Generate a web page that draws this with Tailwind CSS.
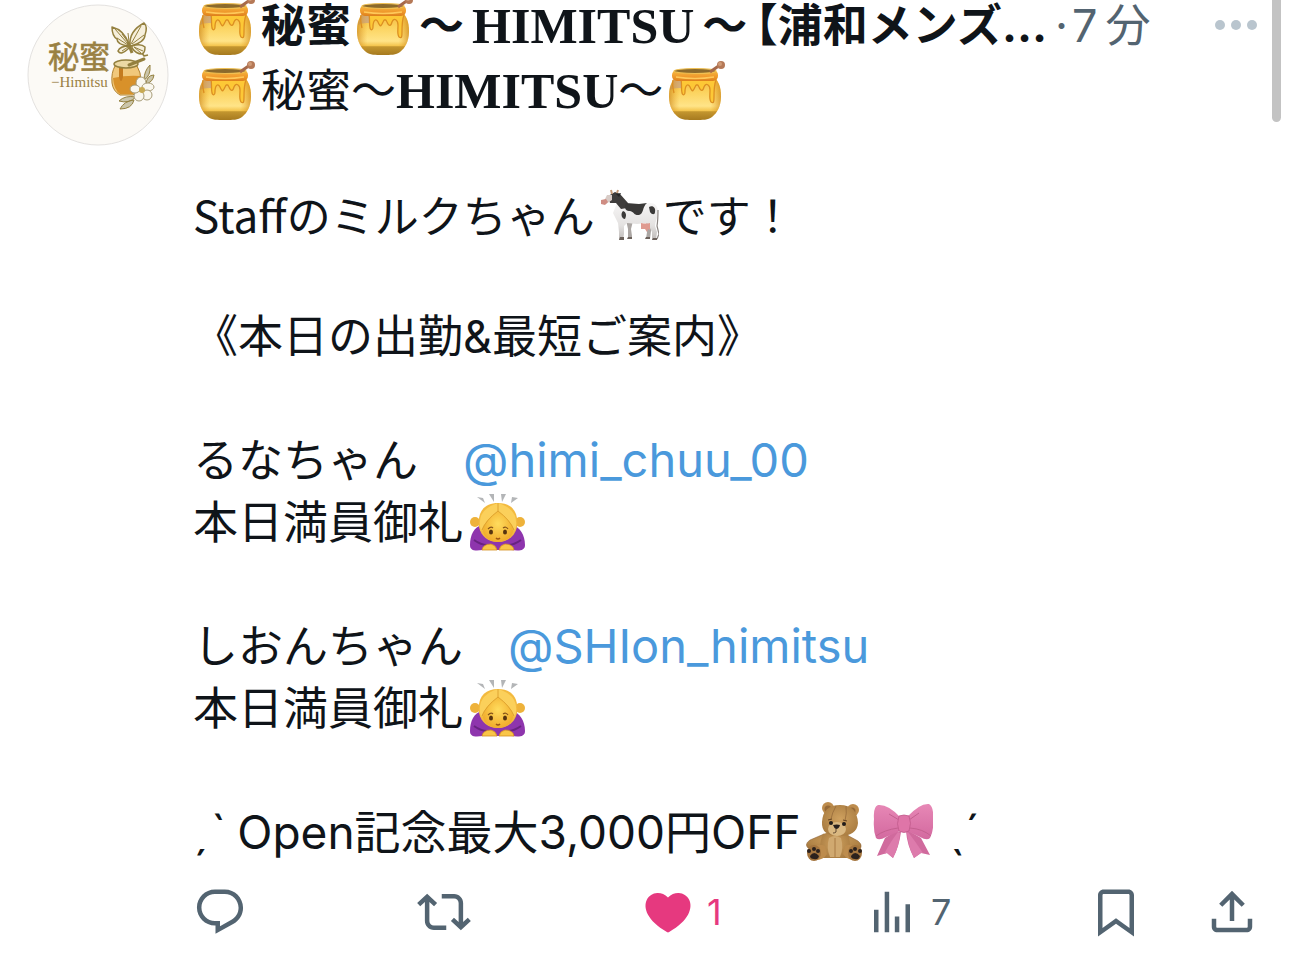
<!DOCTYPE html>
<html lang="ja">
<head>
    <meta charset="UTF-8">
    <meta name="viewport" content="width=device-width, initial-scale=1.0">
    <title>秘蜜〜HIMITSU〜</title>
    <script src="https://cdn.jsdelivr.net/npm/@tailwindcss/browser@4"></script>
</head>
<body class="relative min-h-screen overflow-x-hidden bg-white text-[#0f1419] font-['Inter','Noto_Sans_CJK_JP',sans-serif]">
    <!-- Shared emoji drawings -->
    <svg class="absolute h-0 w-0" aria-hidden="true">
        <defs>
            <linearGradient id="honey-body" x1="0" y1="0" x2="0" y2="1">
                <stop offset="0" stop-color="#f3b640" />
                <stop offset=".3" stop-color="#fbd25c" />
                <stop offset=".66" stop-color="#ffe488" />
                <stop offset=".77" stop-color="#f4c650" />
                <stop offset=".8" stop-color="#c3962f" />
                <stop offset="1" stop-color="#a67a1f" />
            </linearGradient>
            <linearGradient id="honey-side" x1="0" y1="0" x2="1" y2="0">
                <stop offset="0" stop-color="#c2780f" stop-opacity=".6" />
                <stop offset=".2" stop-color="#e69a1c" stop-opacity="0" />
                <stop offset=".8" stop-color="#e69a1c" stop-opacity="0" />
                <stop offset="1" stop-color="#c2780f" stop-opacity=".6" />
            </linearGradient>
            <linearGradient id="honey-rim" x1="0" y1="0" x2="0" y2="1">
                <stop offset="0" stop-color="#f5bc45" />
                <stop offset=".6" stop-color="#f09a2c" />
                <stop offset="1" stop-color="#dd7f1c" />
            </linearGradient>
            <radialGradient id="skin" cx=".5" cy=".45" r=".6">
                <stop offset="0" stop-color="#ffdc5e" />
                <stop offset="1" stop-color="#f0a928" />
            </radialGradient>
            <radialGradient id="fur" cx=".5" cy=".45" r=".6">
                <stop offset="0" stop-color="#cfa15f" />
                <stop offset="1" stop-color="#a87b40" />
            </radialGradient>
            <linearGradient id="pink" x1="0" y1="0" x2="0" y2="1">
                <stop offset="0" stop-color="#e788b6" />
                <stop offset="1" stop-color="#d3699f" />
            </linearGradient>
            <linearGradient id="hide" x1="0" y1="0" x2="0" y2="1">
                <stop offset="0" stop-color="#f6f5f5" />
                <stop offset=".6" stop-color="#e4e2e1" />
                <stop offset="1" stop-color="#bdb9b7" />
            </linearGradient>
        </defs>
        <symbol id="honey" viewBox="0 0 60 60">
            <path d="M7 18C3 23 2 29 2 36c0 9 4 16 9 20 4 3 9 3 17 3s13 0 17-3c5-4 9-11 9-20 0-7-1-13-5-18z" fill="url(#honey-body)" />
            <path d="M4 25l3-7h8v9c-4 0-8 0-12 2z" fill="#cba683" opacity=".8" />
            <path d="M7 18C3 23 2 29 2 36c0 9 4 16 9 20 4 3 9 3 17 3s13 0 17-3c5-4 9-11 9-20 0-7-1-13-5-18z" fill="url(#honey-side)" />
            <path d="M14 18c1 3 0 7 1 14 1 3 3 2 3-1 0-7 3-9 5-5 2 5 3 5 5 0 1-3 3-3 4 0 2 5 4 4 5 0 2-5 6-2 6 3 0 6-1 9 1 12 3 2 3-1 3-5 0-7 0-12 3-18z" fill="#fdc836" />
            <path d="M6 19c-1 5 0 9 1 13M14 19c1 3 0 7 1 13 1 3 3 2 3-1 0-7 3-9 5-5 2 5 3 5 5 0 1-3 3-3 4 0 2 5 4 4 5 0 2-5 6-2 6 3 0 6-1 9 1 12 3 2 3-1 3-5 0-7 0-12 2-17" fill="none" stroke="#dc8f22" stroke-width="1.3" />
            <rect x="5" y="9" width="46" height="11" rx="5" fill="url(#honey-rim)" />
            <ellipse cx="28" cy="10" rx="21" ry="2.5" fill="#8b6a2c" stroke="#f0c052" stroke-width="1.2" />
            <path d="M9 16q19 3 38 0" stroke="#ffc95a" stroke-width="1.5" fill="none" />
            <path d="M43 11L53 4" stroke="#a66949" stroke-width="3" />
            <circle cx="54" cy="4" r="4" fill="#b57957" />
            <circle cx="53" cy="3" r="2" fill="#d09c78" />
        </symbol>
        <symbol id="cow" viewBox="0 0 60 60">
            <path d="M27 36l2 9 0 10 4 0 0-3-1-7 2-8zM48 34l-1 10 1 4-1 7 4 0 1-8 2-10z" fill="#aba6a3" />
            <path d="M18 19l12 0 9 2 12-2c5 0 8 3 8 9 0 5-3 10-3 14l2 6-1 8h-4l0-8-4-8-2-1-9 1-10-1-3 3 0 8-1 6h-4l0-8-1-9-5-10z" fill="url(#hide)" />
            <path d="M9 12l7-4 5 2 8 9-1 5-6 1-5-6-6 0z" fill="#3f3d3c" />
            <path d="M27 19l13 1 8-1c-5 4-3 11-8 12-5 1-6-5-10-4-4 0-5-4-3-8zM50 23c4-2 7 1 6 5 0 3-3 3-5 0zM24 27c3 1 4 4 2 8-3 0-5-5-2-8z" fill="#3a3938" />
            <path d="M8 11l5 0 0 5-6 4-3-1z" fill="#d8cbc6" />
            <path d="M2 16l5-1 2 3-3 3-4-1z" fill="#cf8d83" />
            <path d="M13 10l-1-4M18 9l1-3" stroke="#c59a78" stroke-width="2" />
            <path d="M17 10l5-1-2 4z" fill="#262524" />
            <path d="M42 39q5 1 9 0l0 7-2-1-1 3-2-3-4 0z" fill="#df9a90" />
            <path d="M59 26q0 10-1 16l2 8-2 5" fill="none" stroke="#8b8582" stroke-width="1.2" />
            <path d="M21 53h4v3h-5zM29 53h4v2h-5zM47 53h4v2h-5zM54 54h4v2h-5z" fill="#6b615b" />
        </symbol>
        <symbol id="bowing" viewBox="0 0 60 60">
            <path d="M10 4l6 1 2 5zM22 1h5l0 8zM34 1h5l-4 8zM45 4l6 1-7 5z" fill="#b3b5b7" />
            <path d="M3 52c0-10 4-18 12-20h30c8 2 13 10 13 20 0 6-6 6-14 5H16c-8 1-13 1-13-5z" fill="#8e35ad" />
            <path d="M7 47q7 5 13 5M54 47q-7 5-13 5" stroke="#682381" stroke-width="2" fill="none" />
            <circle cx="8" cy="29" r="5" fill="#eeb23a" />
            <circle cx="53" cy="29" r="5" fill="#eeb23a" />
            <path d="M12 34C10 18 18 10 31 10s21 8 19 24c-2 9-9 15-19 15S14 43 12 34z" fill="#f3ba3f" />
            <path d="M16 38q2-10 15-22 13 12 15 22c-1 7-8 11-15 11s-14-4-15-11z" fill="url(#skin)" />
            <path d="M31 10v8Q18 27 14 38 8 17 31 10M31 10v8q13 9 17 20 6-21-17-28" fill="#fbd05b" />
            <path d="M31 10v8M31 18Q19 27 15 37M31 18q12 9 16 19" fill="none" stroke="#d89a2a" stroke-width=".8" />
            <path d="M21 36q3-3 5-1M36 35q3-2 5 1" stroke="#855219" stroke-width="1.2" fill="none" />
            <ellipse cx="24" cy="39" rx="2" ry="2.5" fill="#57340f" />
            <ellipse cx="38" cy="39" rx="2" ry="2.5" fill="#57340f" />
            <path d="M29 45q2 2 4 0" stroke="#9d5513" stroke-width="1.5" fill="none" />
            <path d="M15 57q1-6 9-6 5 1 6 6zM32 57q1-5 6-6 8 0 9 6z" fill="#f9c548" stroke="#d58f20" stroke-width=".8" />
        </symbol>
        <symbol id="teddy" viewBox="0 0 60 60">
            <path d="M19 32L5 38q-6 4-2 8l17-3zM42 33l11 6q5 4 2 8l-15-4z" fill="url(#fur)" stroke="#86592c" stroke-width=".5" />
            <path d="M18 32q12-5 25 0 4 14 1 24H18q-6-11 0-24z" fill="url(#fur)" />
            <path d="M24 36q6-4 12 0 3 10-1 19H25q-4-9-1-19z" fill="#d0a970" />
            <path d="M30 36v19" stroke="#a87b45" stroke-width="1" />
            <circle cx="23" cy="6" r="6" fill="#bd8c4d" />
            <circle cx="48" cy="8" r="6" fill="#bd8c4d" />
            <circle cx="23" cy="7" r="3.5" fill="#956937" />
            <circle cx="47" cy="9" r="3.5" fill="#956937" />
            <path d="M17 20Q18 3 35 3t18 18q-1 13-19 13T17 20z" fill="url(#fur)" />
            <path d="M31 4q-4 7-5 13M41 4q1 7-1 15" stroke="#95693a" stroke-width=".8" fill="none" />
            <ellipse cx="32" cy="27" rx="9" ry="7" fill="#dab881" />
            <circle cx="26" cy="21" r="2" fill="#211c19" />
            <circle cx="39" cy="22" r="2" fill="#211c19" />
            <path d="M23 18l4-1M38 18l4 1" stroke="#654321" stroke-width="1" />
            <path d="M28 23q4-1 7 0-1 4-4 4-2-1-3-4z" fill="#29211e" />
            <path d="M31 27v3q-1 1-3 1" fill="none" stroke="#493421" stroke-width=".8" />
            <path d="M20 44q-6-3-14 1l4 13q9 0 12-6zM40 44q6-3 14 1l-4 13q-8 0-12-6z" fill="#bd8c4d" />
            <ellipse cx="9" cy="51" rx="7" ry="8" fill="#a4753f" />
            <ellipse cx="50" cy="51" rx="7" ry="8" fill="#a4753f" />
            <path d="M5 54q4-6 9 0-1 4-5 3-4 0-4-3M46 54q4-6 9 0-1 4-5 3-4 0-4-3" fill="#2b211d" />
            <g fill="#2b211d">
                <circle cx="4" cy="49" r="2" /><circle cx="9" cy="47" r="2" /><circle cx="13" cy="49" r="2" />
                <circle cx="46" cy="49" r="2" /><circle cx="50" cy="47" r="2" /><circle cx="55" cy="49" r="2" />
            </g>
        </symbol>
        <symbol id="ribbon" viewBox="0 0 60 60">
            <path d="M23 29L12 36 4 54l10-3 6 5q6-11 8-26zM36 29l12 7 9 17-9-2-7 5q-7-13-8-27z" fill="#d06a9d" />
            <path d="M25 30q-7 9-14 22l3-1 6 5q6-11 7-25zM35 30q7 9 15 21l-2 0-7 5q-6-12-7-25z" fill="#dd7bac" />
            <path d="M27 15Q15 2 5 3 0 5 1 17q-1 11 2 19 3 3 10-1l14-6zM34 15Q47 1 56 2q5 3 4 15 1 12-3 19-3 3-10-1l-13-6z" fill="url(#pink)" />
            <path d="M3 34q8-6 22-8M58 34q-8-7-21-8M16 12l10 6M46 11l-10 7" stroke="#c4608f" stroke-width="1" fill="none" />
            <path d="M26 14q5-2 10 0 3 7 0 15-5 3-10 0-3-7 0-15z" fill="#df75a8" stroke="#c05a8c" stroke-width=".8" />
        </symbol>
    </svg>

    <article class="flex gap-6 pl-[27px]">
        <!-- Avatar -->
        <a href="#" aria-label="秘蜜 Himitsu" class="mt-1 h-[142px] w-[142px] shrink-0">
            <svg viewBox="0 0 142 142" class="h-full w-full">
                <circle cx="71" cy="71" r="70" fill="#fcfaf6" stroke="#e4e2e0" />
                <text x="21" y="64" font-size="31" fill="#9a8143" stroke="#9a8143" stroke-width=".6" font-family="Noto Sans CJK JP, sans-serif">秘蜜</text>
                <text x="24" y="83" font-size="15" fill="#9a8143" font-family="Liberation Serif, serif">−Himitsu</text>
                <!-- butterfly -->
                <g fill="#f6efdb" stroke="#94803f" stroke-width="1.5" stroke-linejoin="round">
                    <path d="M102 40Q97 26 85 23q0 9 5 12 0 6 12 7zM103 41q-1-14 14-22 4 4 1 12 0 7-14 11z" />
                    <path d="M102 42q-9 0-11 5 3 5 11-3zM105 42q9-3 13 1 0 6-3 7-6 0-10-6zM115 49l2 3 4-1" />
                    <path d="M88 25l13 15M90 34l11 7M104 40l10-18M105 40l12-9M95 47l6-4M107 43l9 4M107 43l7 6" fill="none" stroke-width="1" />
                    <path d="M101 38l4 11" fill="none" stroke-width="3" />
                    <path d="M101 38l-6-8M102 38l-1-9" fill="none" stroke-width="1" />
                </g>
                <!-- jar -->
                <path d="M88 62q-4 7-3 17 1 8 8 12h13q7-4 8-13 0-10-4-16z" fill="#f1c87b" stroke="#b1822f" />
                <path d="M86 74q14-3 27-2-1 14-7 18H93q-6-4-7-16z" fill="#d8912a" />
                <path d="M92 63v10q2 8 4 0V64" fill="#c47b1f" />
                <ellipse cx="99" cy="60" rx="12" ry="4" fill="#ecd9a4" stroke="#94803f" stroke-width="1.5" />
                <path d="M102 61l15-6" stroke="#94803f" stroke-width="3" stroke-linecap="round" />
                <!-- flower and leaves -->
                <path d="M117 76q0-9 6-15 1 11-6 15zM119 80q1-9 8-9-1 7-8 9zM109 93q-11-2-17 4 10 3 17-4zM107 96q-10 1-14 9 12 0 14-9z" fill="#cbc5aa" stroke="#94803f" />
                <g fill="#faf7ee" stroke="#a79c78">
                    <ellipse cx="114" cy="79" rx="5" ry="6" />
                    <ellipse cx="121" cy="83" rx="6" ry="4" />
                    <ellipse cx="120" cy="91" rx="5" ry="5" />
                    <ellipse cx="112" cy="92" rx="5" ry="5" />
                    <ellipse cx="108" cy="85" rx="5" ry="4" />
                </g>
                <circle cx="115" cy="86" r="3" fill="#c8aa53" />
            </svg>
        </a>

        <div class="min-w-0 flex-1 text-[45px] leading-[62px]">
            <!-- Name, time and menu -->
            <header class="mb-2 flex h-[52px] items-center whitespace-nowrap">
                <h1 class="flex items-center font-bold">
                    <svg class="mx-1 h-15 w-15" role="img" aria-label="🍯"><use href="#honey" /></svg>
                    <span>秘蜜</span>
                    <svg class="mx-1 h-15 w-15" role="img" aria-label="🍯"><use href="#honey" /></svg>
                    <span>～</span>
                    <span class="mx-2 font-['Liberation_Serif',serif] text-[50px]">HIMITSU</span>
                    <span class="pr-2">～</span>
                    <span class="[font-feature-settings:'halt']">【</span>
                    <span>浦和メンズ…</span>
                </h1>
                <div class="flex pl-2 text-[#536471]">
                    <span>·</span>
                    <time class="flex gap-2 pl-1"><span>7</span><span>分</span></time>
                </div>
                <button type="button" aria-label="その他" class="mr-7 ml-auto h-[54px] w-[54px] text-[#b9c5ce]">
                    <svg viewBox="0 0 54 54" fill="currentColor"><circle cx="12" cy="26" r="5" /><circle cx="28" cy="26" r="5" /><circle cx="44" cy="26" r="5" /></svg>
                </button>
            </header>

            <!-- Post text -->
            <div class="flex flex-col gap-[61px]">
                <p class="flex items-center whitespace-nowrap">
                    <svg class="mx-1 h-15 w-15" role="img" aria-label="🍯"><use href="#honey" /></svg>
                    <span>秘蜜～</span>
                    <span class="font-['Liberation_Serif',serif] text-[50px] font-bold">HIMITSU</span>
                    <span>～</span>
                    <svg class="mx-1 h-15 w-15" role="img" aria-label="🍯"><use href="#honey" /></svg>
                </p>
                <p class="flex items-center text-[44px] whitespace-nowrap">
                    <span class="font-['Noto_Sans_CJK_JP',sans-serif]">Staffのミルクちゃん</span>
                    <svg class="mx-1 h-15 w-15" role="img" aria-label="🐄"><use href="#cow" /></svg>
                    <span class="font-['Noto_Sans_CJK_JP',sans-serif]">です！</span>
                </p>
                <p>《本日の出勤&amp;最短ご案内》</p>
                <div>
                    <p>るなちゃん　<a href="#" class="text-[47px] text-[#4a99dc]">@himi_chuu_00</a></p>
                    <p class="flex items-center">
                        <span>本日満員御礼</span>
                        <svg class="mx-1 h-15 w-15" role="img" aria-label="🙇‍♀️"><use href="#bowing" /></svg>
                    </p>
                </div>
                <div>
                    <p>しおんちゃん　<a href="#" class="text-[47px] text-[#4a99dc]">@SHIon_himitsu</a></p>
                    <p class="flex items-center">
                        <span>本日満員御礼</span>
                        <svg class="mx-1 h-15 w-15" role="img" aria-label="🙇‍♀️"><use href="#bowing" /></svg>
                    </p>
                </div>
                <p class="flex items-center whitespace-nowrap">
                    <span class="pr-3">ˏˋ</span>
                    <span class="text-[46px]">Open記念最大3,000円OFF</span>
                    <svg class="mx-1 h-15 w-15" role="img" aria-label="🧸"><use href="#teddy" /></svg>
                    <svg class="mx-1 h-15 w-15" role="img" aria-label="🎀"><use href="#ribbon" /></svg>
                    <span class="pl-3">ˎˊ</span>
                </p>
            </div>

            <!-- Actions -->
            <div class="mt-[22px] mr-[31px] flex items-center text-[36px] leading-[54px] text-[#536471]">
                <div class="flex-1">
                    <button type="button" aria-label="返信" class="block">
                        <svg class="h-[54px] w-[54px]" viewBox="0 0 24 24" fill="currentColor"><path d="M1.751 10c0-4.42 3.584-8 8.005-8h4.366c4.49 0 8.129 3.64 8.129 8.13 0 2.96-1.607 5.68-4.196 7.11l-8.054 4.46v-3.69h-.067c-4.49.1-8.183-3.51-8.183-8.01zm8.005-6c-3.317 0-6.005 2.69-6.005 6 0 3.37 2.77 6.08 6.138 6.01l.351-.01h1.761v2.3l5.087-2.81c1.951-1.08 3.163-3.13 3.163-5.36 0-3.39-2.744-6.13-6.129-6.13H9.756z" /></svg>
                    </button>
                </div>
                <div class="flex-1">
                    <button type="button" aria-label="リポスト" class="block">
                        <svg class="h-[54px] w-[54px]" viewBox="0 0 24 24" fill="currentColor"><path d="M4.5 3.88l4.432 4.14-1.364 1.46L5.5 7.55V16c0 1.1.896 2 2 2H13v2H7.5c-2.209 0-4-1.79-4-4V7.55L1.432 9.48.068 8.02 4.5 3.88zM16.5 6H11V4h5.5c2.209 0 4 1.79 4 4v8.45l2.068-1.93 1.364 1.46-4.432 4.14-4.432-4.14 1.364-1.46 2.068 1.93V8c0-1.1-.896-2-2-2z" /></svg>
                    </button>
                </div>
                <div class="flex-1">
                    <button type="button" aria-label="いいね 1" class="flex items-center gap-3 text-[#e6397f]">
                        <svg class="h-[54px] w-[54px]" viewBox="0 0 24 24" fill="currentColor"><path d="M20.884 13.19c-1.351 2.48-4.001 5.12-8.379 7.67l-.503.3-.504-.3c-4.379-2.55-7.029-5.19-8.382-7.67-1.36-2.5-1.41-4.86-.514-6.67.887-1.79 2.647-2.91 4.601-3.01 1.651-.09 3.368.56 4.798 2.01 1.429-1.45 3.146-2.1 4.796-2.01 1.954.1 3.714 1.22 4.601 3.01.896 1.81.846 4.17-.514 6.67z" /></svg>
                        <span>1</span>
                    </button>
                </div>
                <div class="flex-1">
                    <button type="button" aria-label="表示 7" class="flex items-center gap-3">
                        <svg class="h-[54px] w-[54px]" viewBox="0 0 24 24" fill="currentColor"><path d="M8.75 21V3h2v18h-2zM18 21V8.5h2V21h-2zM4 21l.004-10h2L6 21H4zm9.248 0v-7h2v7h-2z" /></svg>
                        <span>7</span>
                    </button>
                </div>
                <button type="button" aria-label="ブックマーク" class="mr-[62px]">
                    <svg class="h-[54px] w-[54px]" viewBox="0 0 24 24" fill="currentColor"><path d="M4 4.5C4 3.12 5.119 2 6.5 2h11C18.881 2 20 3.12 20 4.5v18.44l-8-5.71-8 5.71V4.5zM6.5 4c-.276 0-.5.22-.5.5v14.56l6-4.29 6 4.29V4.5c0-.28-.224-.5-.5-.5h-11z" /></svg>
                </button>
                <button type="button" aria-label="共有">
                    <svg class="h-[54px] w-[54px]" viewBox="0 0 24 24" fill="currentColor"><path d="M12 2.59l5.7 5.7-1.41 1.42L13 6.41V16h-2V6.41l-3.3 3.3-1.41-1.42L12 2.59zM21 15l-.02 3.51c0 1.38-1.12 2.49-2.5 2.49H5.5C4.11 21 3 19.88 3 18.5V15h2v3.5c0 .28.22.5.5.5h12.98c.28 0 .5-.22.5-.5L19 15h2z" /></svg>
                </button>
            </div>
        </div>
    </article>

    <!-- Scroll indicator -->
    <div class="absolute top-0 right-[9px] h-[122px] w-[9px] rounded-b-full bg-[#c3c3c3]"></div>
</body>
</html>
